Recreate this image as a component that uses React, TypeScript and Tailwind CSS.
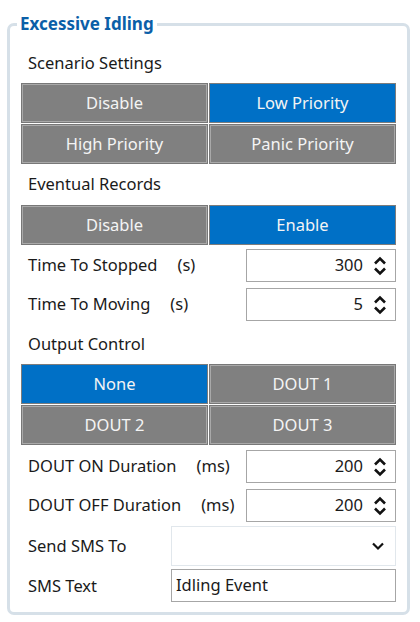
const FONT = "font-['Noto_Sans','Open_Sans',sans-serif]";

function Toggle({ label, active }: { label: string; active?: boolean }) {
  return (
    <div
      className={
        "h-[40px] flex items-center justify-center text-[16.5px] text-[#f4f4f4] " +
        (active
          ? "bg-[#0070c6] shadow-[inset_0_0_0_1px_#7c7c7c]"
          : "bg-[#808080] shadow-[inset_0_0_0_1px_#787878,inset_0_0_0_2px_#a9a9a9]")
      }
    >
      {label}
    </div>
  );
}

function Spinner() {
  return (
    <svg width="14" height="22" viewBox="0 0 14 22" className="ml-[10px]">
      <path d="M2 8.5 L7 3.5 L12 8.5" fill="none" stroke="#111" strokeWidth="2.6" />
      <path d="M2 13.5 L7 18.5 L12 13.5" fill="none" stroke="#111" strokeWidth="2.6" />
    </svg>
  );
}

function NumberRow({ label, unit, value }: { label: string; unit: string; value: string }) {
  return (
    <div className="flex items-center h-[39px]">
      <span className="pl-[7px]">{label}</span>
      <span className="ml-[20px]">{unit}</span>
      <div className="ml-auto w-[150px] h-[33px] border border-[#a6a6a6] flex items-center justify-end pr-[8px] bg-white">
        <span>{value}</span>
        <Spinner />
      </div>
    </div>
  );
}

export default function App() {
  return (
    <div className={"w-[420px] h-[622px] bg-white pt-[13px] pl-[7px] pr-[10px] text-[#1a1a1a] text-[16.5px] " + FONT}>
      <fieldset className="border-[3px] border-[#d6e0e8] rounded-[7px] px-[11px] pb-[12px] h-[602px]">
        <legend className="px-[3px] ml-[-4px] text-[17px] font-bold text-[#0b5fa8] leading-[22px]">Excessive Idling</legend>

        <div className="h-[39px] flex items-center pl-[7px] mt-[9px]">Scenario Settings</div>
        <div className="grid grid-cols-2 gap-[1px]">
          <Toggle label="Disable" />
          <Toggle label="Low Priority" active />
          <Toggle label="High Priority" />
          <Toggle label="Panic Priority" />
        </div>

        <div className="h-[41px] flex items-center pl-[7px]">Eventual Records</div>
        <div className="grid grid-cols-2 gap-[1px]">
          <Toggle label="Disable" />
          <Toggle label="Enable" active />
        </div>

        <div className="pt-[1px]">
          <NumberRow label="Time To Stopped" unit="(s)" value="300" />
          <NumberRow label="Time To Moving" unit="(s)" value="5" />
        </div>

        <div className="h-[40px] flex items-center pl-[7px]">Output Control</div>
        <div className="grid grid-cols-2 gap-[1px]">
          <Toggle label="None" active />
          <Toggle label="DOUT 1" />
          <Toggle label="DOUT 2" />
          <Toggle label="DOUT 3" />
        </div>

        <div className="pt-[2px]">
          <NumberRow label="DOUT ON Duration" unit="(ms)" value="200" />
          <NumberRow label="DOUT OFF Duration" unit="(ms)" value="200" />
        </div>

        <div className="flex items-center h-[42px]">
          <span className="pl-[7px]">Send SMS To</span>
          <div className="ml-auto w-[225px] h-[40px] border border-[#e1e7ec] flex items-center justify-end pr-[10px]">
            <svg width="14" height="10" viewBox="0 0 14 10">
              <path d="M2 2.5 L7 7.5 L12 2.5" fill="none" stroke="#111" strokeWidth="2.2" />
            </svg>
          </div>
        </div>
        <div className="flex items-center h-[36px]">
          <span className="pl-[7px] pt-[2px]">SMS Text</span>
          <div className="ml-auto w-[225px] h-[33px] border border-[#a6a6a6] flex items-center pl-[4px]">
            Idling Event
          </div>
        </div>
      </fieldset>
    </div>
  );
}
